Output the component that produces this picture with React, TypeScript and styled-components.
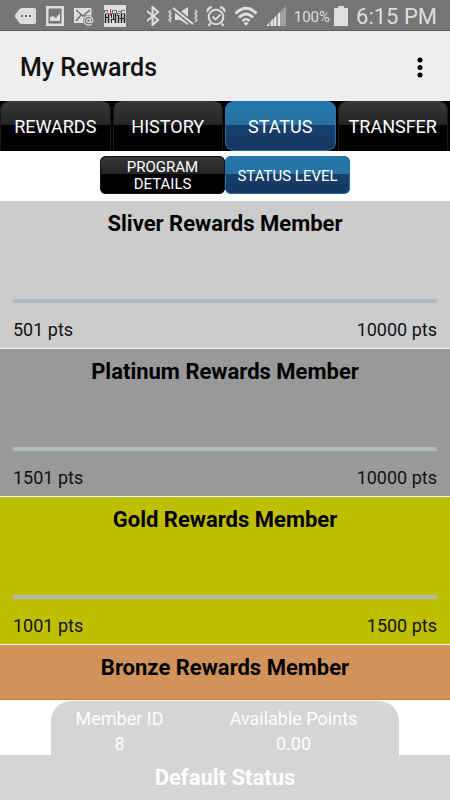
import React from "react";
import styled, { createGlobalStyle } from "styled-components";

const GlobalStyle = createGlobalStyle`
  *, *::before, *::after { box-sizing: border-box; }
  body { margin: 0; background: #fff; font-family: Roboto, "Liberation Sans", sans-serif; color: #111; }
  button { font-family: inherit; border: 0; padding: 0; cursor: pointer; }
  h1, h2, p, dl, dt, dd { margin: 0; font-weight: 400; }
`;

const Screen = styled.div`
  display: flex;
  flex-direction: column;
  min-height: 100vh;
`;

const StatusBar = styled.div`
  flex: none;
  display: flex;
  align-items: center;
  justify-content: space-between;
  height: 31px;
  padding: 2px 13px 0 14px;
  background: #757575;
  border-bottom: 1px solid #5e5e5e;
  color: #dedede;
`;

const IconGroup = styled.div<{ $gap: number }>`
  display: flex;
  align-items: center;
  gap: ${(p) => p.$gap}px;
  svg { display: block; flex: none; }
`;

const BatteryText = styled.span`
  padding-top: 2px;
  font-size: 15px;
  line-height: 20px;
`;

const Clock = styled.span`
  padding: 2px 0 0 4px;
  font-size: 22px;
  line-height: 26px;
`;

const AppBar = styled.header`
  flex: none;
  display: flex;
  align-items: center;
  justify-content: space-between;
  height: 70px;
  padding: 3px 20px 0;
  background: #eee;
`;

const PageTitle = styled.h1`
  && { font-size: 25px; font-weight: 500; line-height: 32px; }
`;

const MenuButton = styled.button`
  display: flex;
  background: none;
  padding: 4px 7px;
`;

const Tabs = styled.nav`
  flex: none;
  display: grid;
  grid-template-columns: repeat(4, 1fr);
  height: 50px;
  background: #000;
`;

const darkGloss = "linear-gradient(#39393b 0, #242426 47%, #000 48%, #000 100%)";
const blueGloss = "linear-gradient(#2478ae 0, #2871a0 47%, #17406d 48%, #16365f 100%)";

const Tab = styled.button<{ $active?: boolean }>`
  margin-right: 2px;
  padding-top: 2px;
  border-radius: ${(p) => (p.$active ? "9px" : "9px 9px 0 0")};
  background: ${(p) => (p.$active ? blueGloss : darkGloss)};
  box-shadow: ${(p) => (p.$active ? "inset 0 0 0 1px #2273ad" : "inset 1px 0 #1c1c1c, inset -1px 0 #1c1c1c")};
  color: #fff;
  font-size: 18px;
  line-height: 22px;
`;

const SubTabs = styled.nav`
  flex: none;
  display: flex;
  justify-content: center;
  height: 50px;
  padding: 5px 0 7px;
`;

const SubTab = styled.button<{ $active?: boolean }>`
  width: 125px;
  padding: 2px 12px 0;
  border-radius: 6px;
  background: ${(p) => (p.$active ? blueGloss : darkGloss)};
  box-shadow: inset 0 0 0 1px ${(p) => (p.$active ? "#2273ad" : "#111")};
  color: #fff;
  font-size: 15px;
  line-height: 17px;
`;

const LevelList = styled.main`
  flex: 1;
  display: flex;
  flex-direction: column;
  border-bottom: 1px solid #c9822f;
`;

const Level = styled.section<{ $color: string }>`
  flex: none;
  display: flex;
  flex-direction: column;
  height: 148px;
  padding: 8px 13px 7px;
  background: ${(p) => p.$color};
  border-bottom: 1px solid #f4f4ee;

  &:last-child {
    flex: 1;
    height: auto;
    border-bottom: 0;
  }
`;

const LevelName = styled.h2`
  && { font-size: 22px; font-weight: 700; line-height: 30px; }
  text-align: center;
  color: #000;
`;

const Track = styled.div`
  height: 4px;
  margin: auto 0 16px;
  background: #b0babd;
`;

const Range = styled.div`
  display: flex;
  justify-content: space-between;
  font-size: 18px;
  line-height: 22px;
`;

const Footer = styled.footer`
  flex: none;
  padding-top: 1px;
  color: #fff;
`;

const Summary = styled.dl`
  && { margin: 0 51px; }
  display: grid;
  grid-template-columns: 137px 1fr;
  height: 54px;
  padding-top: 5px;
  border-radius: 20px 20px 0 0;
  background: #d5d5d5;
  text-align: center;
  font-size: 18px;
  line-height: 25px;
`;

const DefaultStatus = styled.p`
  padding: 8px 0 7px;
  background: #d5d5d5;
  text-align: center;
  font-size: 22px;
  line-height: 30px;
  && { font-weight: 700; }
`;

type LevelData = { name: string; color: string; range?: [number, number] };

const levels: LevelData[] = [
  { name: "Sliver Rewards Member", color: "#ccc", range: [501, 10000] },
  { name: "Platinum Rewards Member", color: "#999", range: [1501, 10000] },
  { name: "Gold Rewards Member", color: "#bfbf00", range: [1001, 1500] },
  { name: "Bronze Rewards Member", color: "#d1935a" },
];

const MessageIcon = () => (
  <svg width="22" height="18" viewBox="0 0 22 18" aria-hidden="true">
    <path d="M8 1h12q2 0 2 2v12q0 2-2 2H8q-2 0-3-1.5L.5 9 5 2.500Q6 1 8 1z" fill="#dedede" />
    <g fill="#666"><rect x="7" y="8" width="2" height="2" /><rect x="11" y="8" width="2" height="2" /><rect x="15" y="8" width="2" height="2" /></g>
  </svg>
);

const PictureIcon = () => (
  <svg width="18" height="20" viewBox="0 0 18 20" aria-hidden="true">
    <path d="M1.250 1.250h15.500v17.500h-15.500z" fill="none" stroke="#dedede" strokeWidth="2.500" />
    <path d="M4 15v-4l3-1 3 2 4-5v8z" fill="#dedede" />
  </svg>
);

const MailIcon = () => (
  <svg width="20" height="19" viewBox="0 0 20 19" aria-hidden="true">
    <path d="M0 1h17.500v9L10 16H0z" fill="#dedede" />
    <path d="M2 3l7 6 7-6M2 14l5-6M10 8l4 4" fill="none" stroke="#707070" strokeWidth="1.600" />
    <circle cx="14.500" cy="13.500" r="5.500" fill="#757575" />
    <path d="M17.500 17a4.500 4.500 0 1 1 1.500-3.500c0 2.500-2.500 2.500-2.500.5v-2.500" fill="none" stroke="#dedede" strokeWidth="1.200" />
    <circle cx="14.500" cy="13.500" r="1.900" fill="none" stroke="#dedede" strokeWidth="1.200" />
  </svg>
);

const BarcodeIcon = () => (
  <svg width="22" height="22" viewBox="0 0 22 22" aria-hidden="true">
    <path d="M0 0h22v22H0z" fill="#dedede" />
    <g fill="none" stroke="#222">
      <path d="M.5 5v3M3.500 5v2M8.500 5v4M12.500 5v3M17.500 5v3" stroke="#666" />
      <path d="M1 5.500h2M9 5.500h3M14 6.500h3M18 5.500h3M1 8.500h20" stroke="#777" />
      <path d="M1.500 9v9M4.500 9v9M11.500 9v9M14.500 11v7M17.500 9v9M20.500 9v9" strokeWidth="1.500" />
      <path d="M7.500 9v4m2-4v5m3-3.500h3m-9 4h5m4-1h5M1 12.500h4M7.500 15v3" />
    </g>
    <path d="M6.500 4v7M13.500 8v3" stroke="#cc4b4b" />
  </svg>
);

const BluetoothIcon = () => (
  <svg width="14" height="20" viewBox="0 0 14 20" aria-hidden="true">
    <path d="M1 5l11 9-5.500 5V1L12 6 1 15" fill="none" stroke="#dedede" strokeWidth="2" />
  </svg>
);

const MutedIcon = () => (
  <svg width="30" height="20" viewBox="0 0 30 20" aria-hidden="true">
    <path d="M7 6h5l8-5v18l-8-5H7z" fill="#dedede" />
    <path d="M5 2l20 16" stroke="#757575" strokeWidth="5" />
    <path d="M5 2l20 16" stroke="#dedede" strokeWidth="2.200" />
    <path d="M3 4L1 6l2 2-2 2 2 2-2 2 2 2M27 4l2 2-2 2 2 2-2 2 2 2-2 2" fill="none" stroke="#dedede" strokeWidth="1.300" />
  </svg>
);

const AlarmIcon = () => (
  <svg width="20" height="21" viewBox="0 0 20 21" aria-hidden="true">
    <g fill="none" stroke="#dedede">
      <circle cx="10" cy="11" r="7.300" strokeWidth="2" />
      <path d="M1.500 6A4 4 0 0 1 6 1.500M14 1.500A4 4 0 0 1 18.500 6M4.500 17.500L2.500 20M15.500 17.500l2 2.500" strokeWidth="2.200" />
      <path d="M6.500 10.500l3 3 5-5" strokeWidth="1.800" />
    </g>
  </svg>
);

const WifiIcon = () => (
  <svg width="24" height="20" viewBox="0 0 24 20" aria-hidden="true">
    <g fill="none" stroke="#dedede" strokeWidth="3">
      <path d="M1.500 7.500Q12-3 22.500 7.500" /><path d="M5 11.500q7-7 14 0" /><path d="M8.500 15q3.500-3.500 7 0" strokeWidth="2.500" />
    </g>
    <path d="M12 20l-2.500-3q2.500-2 5 0z" fill="#dedede" />
  </svg>
);

const SignalIcon = () => (
  <svg width="20" height="20" viewBox="0 0 20 20" aria-hidden="true">
    <path d="M0 20L20 0v20z" fill="#a0a0a0" />
    <path d="M1 20v-1l2-2v3zM5 20v-5l2-2v7zM8 20v-8l2-2v10zM12 20V8l2-2v14z" fill="#e6e6e6" />
  </svg>
);

const BatteryIcon = () => (
  <svg width="14" height="20" viewBox="0 0 14 20" aria-hidden="true">
    <path d="M0 2h4V0h6v2h4v18H0z" fill="#dedede" />
  </svg>
);

export default function App() {
  return (
    <>
      <GlobalStyle />
      <Screen>
        <StatusBar>
          <IconGroup $gap={10}>
            <MessageIcon />
            <PictureIcon />
            <MailIcon />
            <BarcodeIcon />
          </IconGroup>
          <IconGroup $gap={8}>
            <BluetoothIcon />
            <MutedIcon />
            <AlarmIcon />
            <WifiIcon />
            <SignalIcon />
            <IconGroup $gap={4}>
              <BatteryText>100%</BatteryText>
              <BatteryIcon />
              <Clock>6:15 PM</Clock>
            </IconGroup>
          </IconGroup>
        </StatusBar>
        <AppBar>
          <PageTitle>My Rewards</PageTitle>
          <MenuButton type="button" aria-label="More options">
            <svg width="6" height="22" viewBox="0 0 6 22" aria-hidden="true">
              <circle cx="3" cy="3" r="2.500" /><circle cx="3" cy="10.500" r="2.500" /><circle cx="3" cy="18" r="2.500" />
            </svg>
          </MenuButton>
        </AppBar>
        <Tabs aria-label="Sections">
          <Tab type="button">REWARDS</Tab>
          <Tab type="button">HISTORY</Tab>
          <Tab type="button" $active aria-current="page">STATUS</Tab>
          <Tab type="button">TRANSFER</Tab>
        </Tabs>
        <SubTabs aria-label="Status views">
          <SubTab type="button">PROGRAM DETAILS</SubTab>
          <SubTab type="button" $active aria-current="page">STATUS LEVEL</SubTab>
        </SubTabs>
        <LevelList>
          {levels.map(({ name, color, range }) => (
            <Level key={name} $color={color}>
              <LevelName>{name}</LevelName>
              {range && (
                <>
                  <Track />
                  <Range>
                    <span>{range[0]} pts</span>
                    <span>{range[1]} pts</span>
                  </Range>
                </>
              )}
            </Level>
          ))}
        </LevelList>
        <Footer>
          <Summary>
            <div>
              <dt>Member ID</dt>
              <dd>8</dd>
            </div>
            <div>
              <dt>Available Points</dt>
              <dd>0.00</dd>
            </div>
          </Summary>
          <DefaultStatus>Default Status</DefaultStatus>
        </Footer>
      </Screen>
    </>
  );
}
